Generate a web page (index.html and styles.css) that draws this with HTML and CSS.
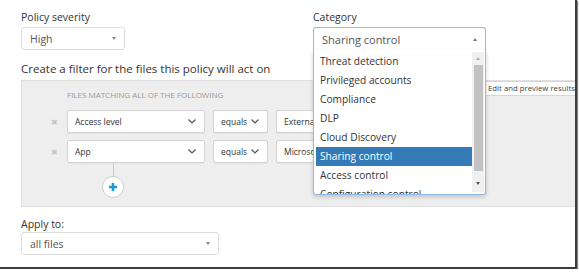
FILE: index.html
```html
<!DOCTYPE html>
<html lang="en">

<head>
    <meta charset="utf-8">
    <title>Policy filter</title>
    <link rel="stylesheet" href="styles.css">
</head>

<body>
    <div class="shot">
        <div class="top">
            <div class="field">
                <div class="lbl">Policy severity</div>
                <div class="select sel-sev"><span>High</span><i class="caret"></i></div>
            </div>
            <div class="field cat">
                <div class="lbl">Category</div>
                <div class="select sel-cat"><span>Sharing control</span><i class="caret up"></i></div>
                <div class="options">
                    <ul>
                        <li>Threat detection</li>
                        <li>Privileged accounts</li>
                        <li>Compliance</li>
                        <li>DLP</li>
                        <li>Cloud Discovery</li>
                        <li class="valgt">Sharing control</li>
                        <li>Access control</li>
                        <li>Configuration control</li>
                    </ul>
                    <div class="scroll">
                        <i class="caret up"></i>
                        <div class="thumb"></div>
                        <i class="caret"></i>
                    </div>
                </div>
            </div>
        </div>

        <div class="lbl filter-lbl">Create a filter for the files this policy will act on</div>

        <div class="panel">
            <div class="edit">Edit and preview results</div>
            <div class="rules-head">Files matching all of the following</div>
            <div class="rule">
                <span class="remove">&#10006;</span>
                <div class="box w1">Access level<svg class="chev" width="8" height="5" viewBox="0 0 8 5"><path d="M0.5 0.5 L4 4 L7.5 0.5" fill="none" stroke="#555" stroke-width="1.2"/></svg></div>
                <div class="box w2">equals<svg class="chev" width="8" height="5" viewBox="0 0 8 5"><path d="M0.5 0.5 L4 4 L7.5 0.5" fill="none" stroke="#555" stroke-width="1.2"/></svg></div>
                <div class="box w3">External</div>
            </div>
            <div class="rule">
                <span class="remove">&#10006;</span>
                <div class="box w1">App<svg class="chev" width="8" height="5" viewBox="0 0 8 5"><path d="M0.5 0.5 L4 4 L7.5 0.5" fill="none" stroke="#555" stroke-width="1.2"/></svg></div>
                <div class="box w2">equals<svg class="chev" width="8" height="5" viewBox="0 0 8 5"><path d="M0.5 0.5 L4 4 L7.5 0.5" fill="none" stroke="#555" stroke-width="1.2"/></svg></div>
                <div class="box w3">Microsoft</div>
            </div>
            <div class="add">
                <div class="stem"></div>
                <div class="plus">
                    <svg width="10" height="10" viewBox="0 0 10 10"><path d="M5 1 V9 M1 5 H9" stroke="#1a9ad6" stroke-width="2.6"/></svg>
                </div>
            </div>
        </div>

        <div class="lbl apply-lbl">Apply to:</div>
        <div class="select sel-apply"><span>all files</span><i class="caret"></i></div>
    </div>
</body>

</html>
```

FILE: styles.css
```css
body {
    margin: 0;
    background: #fff;
    font-family: 'Open Sans', 'Noto Sans', sans-serif;
    color: #333;
}

.shot {
    width: 577px;
    height: 269px;
    overflow: hidden;
    box-sizing: border-box;
    padding: 9px 0 0 21px;
    border-right: 2px solid #3c3c3c;
    border-bottom: 2px solid #3c3c3c;
    box-shadow: 1px 1px 1px #8a8a8a;
    position: relative;
}

.top {
    display: grid;
    grid-template-columns: 292px 173px;
}

.field {
    position: relative;
}

.lbl {
    font-size: 10.5px;
    line-height: 16px;
    color: #333;
}

.select {
    margin-top: 2px;
    height: 23px;
    box-sizing: border-box;
    border: 1px solid #dcdcdc;
    border-radius: 3px;
    display: flex;
    align-items: center;
    justify-content: space-between;
    padding: 0 8px 0 8px;
    font-size: 10.5px;
    color: #555;
    background: #fff;
}

.sel-sev {
    width: 104px;
}

.sel-cat {
    border-color: #8fbbe8;
    border-bottom: none;
    border-radius: 3px 3px 0 0;
    font-size: 11px;
}

.sel-apply {
    width: 198px;
    margin-top: 0;
}

.caret {
    width: 0;
    height: 0;
    border-left: 2.5px solid transparent;
    border-right: 2.5px solid transparent;
    border-top: 3px solid #888;
}

.caret.up {
    border-top: none;
    border-bottom: 3px solid #777;
}

.options {
    position: absolute;
    z-index: 5;
    left: 0;
    top: 41px;
    width: 173px;
    height: 145px;
    box-sizing: border-box;
    border: 1px solid #8fbbe8;
    border-top: none;
    border-radius: 0 0 3px 3px;
    background: #fff;
    box-shadow: 0 2px 4px rgba(0, 0, 0, 0.18);
    display: flex;
    overflow: hidden;
}

.options ul {
    list-style: none;
    margin: 0;
    padding: 2px 0 0 2px;
    flex: 1;
}

.options li {
    height: 19px;
    line-height: 19px;
    padding-left: 4px;
    font-size: 10.2px;
    color: #333;
    white-space: nowrap;
}

.options li.valgt {
    background: #337ab7;
    color: #fff;
}

.scroll {
    width: 12px;
    margin: 2px 1px 2px 0;
    background: #f0f0f0;
    display: flex;
    flex-direction: column;
    align-items: center;
    padding-top: 5px;
}

.scroll .thumb {
    width: 9px;
    height: 106px;
    margin: 5px 0 11px;
    background: #c2c2c2;
}

.scroll .caret {
    border-top-color: #555;
}

.scroll .caret.up {
    border-bottom-color: #aaa;
}

.filter-lbl {
    margin-top: 11px;
    font-size: 11.5px;
}

.panel {
    position: relative;
    margin-top: 3px;
    width: 570px;
    height: 127px;
    box-sizing: border-box;
    background: #eeeeee;
    border: 1px solid #e0e0e0;
    padding: 8px 0 0 22px;
}

.edit {
    position: absolute;
    left: 458px;
    top: 0;
    width: 120px;
    height: 15px;
    box-sizing: border-box;
    background: #fff;
    border: 1px solid #d6d6d6;
    padding-left: 7px;
    font-size: 7.8px;
    line-height: 13px;
    color: #444;
    white-space: nowrap;
}

.rules-head {
    margin-left: 23px;
    font-size: 8px;
    line-height: 12px;
    text-transform: uppercase;
    color: #999;
}

.rule {
    display: flex;
    align-items: center;
    gap: 8px;
    margin-top: 9px;
}

.rule + .rule {
    margin-top: 7px;
}

.remove {
    width: 20px;
    margin-right: -5px;
    text-align: center;
    font-size: 8px;
    color: #c4c4c4;
}

.box {
    height: 23px;
    box-sizing: border-box;
    background: #fff;
    border: 1px solid #d4d4d4;
    border-radius: 2px;
    padding: 0 8px 0 7px;
    display: flex;
    align-items: center;
    justify-content: space-between;
    font-size: 8.5px;
    color: #333;
    box-shadow: 0 1px 1px rgba(0, 0, 0, 0.05);
}

.w1 {
    width: 138px;
}

.w2 {
    width: 55px;
}

.w3 {
    width: 120px;
}

.add {
    margin-left: 58px;
    width: 22px;
    display: flex;
    flex-direction: column;
    align-items: center;
}

.stem {
    width: 1px;
    height: 13px;
    background: #c8c8c8;
}

.plus {
    width: 22px;
    height: 22px;
    box-sizing: border-box;
    border: 1px solid #cfcfcf;
    border-radius: 50%;
    background: #fff;
    display: flex;
    align-items: center;
    justify-content: center;
}

.apply-lbl {
    margin-top: 10px;
    line-height: 15px;
}
```
